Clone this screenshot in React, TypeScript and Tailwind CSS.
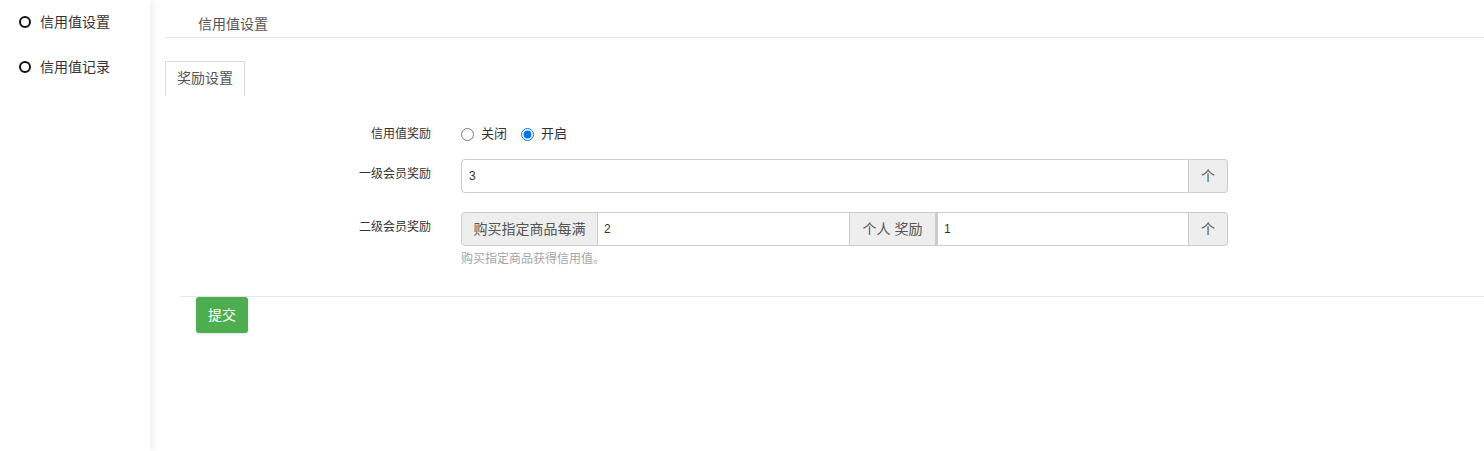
import React from 'react';

const font = "font-['Liberation_Sans','Noto_Sans_CJK_SC',sans-serif]";

const Dot: React.FC = () => (
  <span className="inline-block w-[12px] h-[12px] rounded-full border-2 border-[#111] mr-[9px] shrink-0" />
);

const App: React.FC = () => {
  return (
    <div className={`flex h-[451px] bg-white text-[#333] ${font}`}>
      {/* Sidebar */}
      <aside className="w-[150px] shrink-0 bg-white shadow-[3px_0_8px_rgba(0,0,0,0.07)] z-10 pt-[11px] pl-[19px]">
        <div className="flex items-center h-[22px] text-[14px] text-[#333]">
          <Dot />
          信用值设置
        </div>
        <div className="flex items-center h-[22px] mt-[23px] text-[14px] text-[#333]">
          <Dot />
          信用值记录
        </div>
      </aside>

      {/* Main */}
      <main className="flex-1 pl-[15px]">
        <div className="h-[38px] border-b border-[#e8e8e8] pl-[33px] pt-[14px] text-[14px] leading-[20px] text-[#555]">
          信用值设置
        </div>

        <div className="mt-[23px] flex">
          <div className="h-[35px] px-[11px] border border-b-0 border-[#ddd] text-[14px] leading-[33px] text-[#555]">
            奖励设置
          </div>
        </div>

        <form className="pt-[25px]" onSubmit={e => e.preventDefault()}>
          <div className="px-[15px]">
            {/* Radio row */}
            <div className="flex items-center h-[26px]">
              <label className="w-[281px] pr-[30px] text-right text-[12px]">信用值奖励</label>
              <div className="flex items-center text-[13px]">
                <input type="radio" name="on" className="w-[13px] h-[13px] m-0 accent-[#0075ff]" />
                <span className="ml-[7px]">关闭</span>
                <input type="radio" name="on" defaultChecked className="w-[13px] h-[13px] m-0 ml-[14px] accent-[#0075ff]" />
                <span className="ml-[7px]">开启</span>
              </div>
            </div>

            {/* Row 1 */}
            <div className="flex mt-[12px]">
              <label className="w-[281px] pr-[30px] text-right text-[12px] pt-[6px]">一级会员奖励</label>
              <div className="flex w-[767px] h-[34px]">
                <input
                  defaultValue="3"
                  className="flex-1 min-w-0 border border-[#ccc] rounded-l-[4px] px-[7px] text-[12px] outline-none"
                />
                <span className="w-[39px] flex items-center justify-center bg-[#eee] border border-l-0 border-[#ccc] rounded-r-[4px] text-[14px] text-[#555]">个</span>
              </div>
            </div>

            {/* Row 2 */}
            <div className="flex mt-[19px]">
              <label className="w-[281px] pr-[30px] text-right text-[12px] pt-[6px]">二级会员奖励</label>
              <div>
                <div className="flex w-[767px] h-[34px]">
                  <span className="w-[137px] flex items-center justify-center bg-[#eee] border border-[#ccc] rounded-l-[4px] text-[14px] text-[#555]">购买指定商品每满</span>
                  <input
                    defaultValue="2"
                    className="w-[252px] border border-l-0 border-[#ccc] px-[6px] text-[12px] outline-none"
                  />
                  <span className="w-[86px] flex items-center justify-center bg-[#eee] border border-l-0 border-[#ccc] text-[14px] text-[#555]">个人 奖励</span>
                  <input
                    defaultValue="1"
                    className="flex-1 min-w-0 border border-l-[2px] border-[#ccc] px-[6px] text-[12px] outline-none"
                  />
                  <span className="w-[39px] flex items-center justify-center bg-[#eee] border border-l-0 border-[#ccc] rounded-r-[4px] text-[14px] text-[#555]">个</span>
                </div>
                <p className="mt-[5px] text-[12px] leading-[17px] text-[#a5a5a5]">购买指定商品获得信用值。</p>
              </div>
            </div>
          </div>

          <div className="mt-[28px] ml-[15px] border-t border-[#e8e8e8]">
            <button
              type="submit"
              className="ml-[16px] w-[52px] h-[36px] bg-[#4cae4f] text-white text-[14px] rounded-[3px] shadow-[0_1px_3px_rgba(0,0,0,0.12)]"
            >
              提交
            </button>
          </div>
        </form>
      </main>
    </div>
  );
};

export default App;
